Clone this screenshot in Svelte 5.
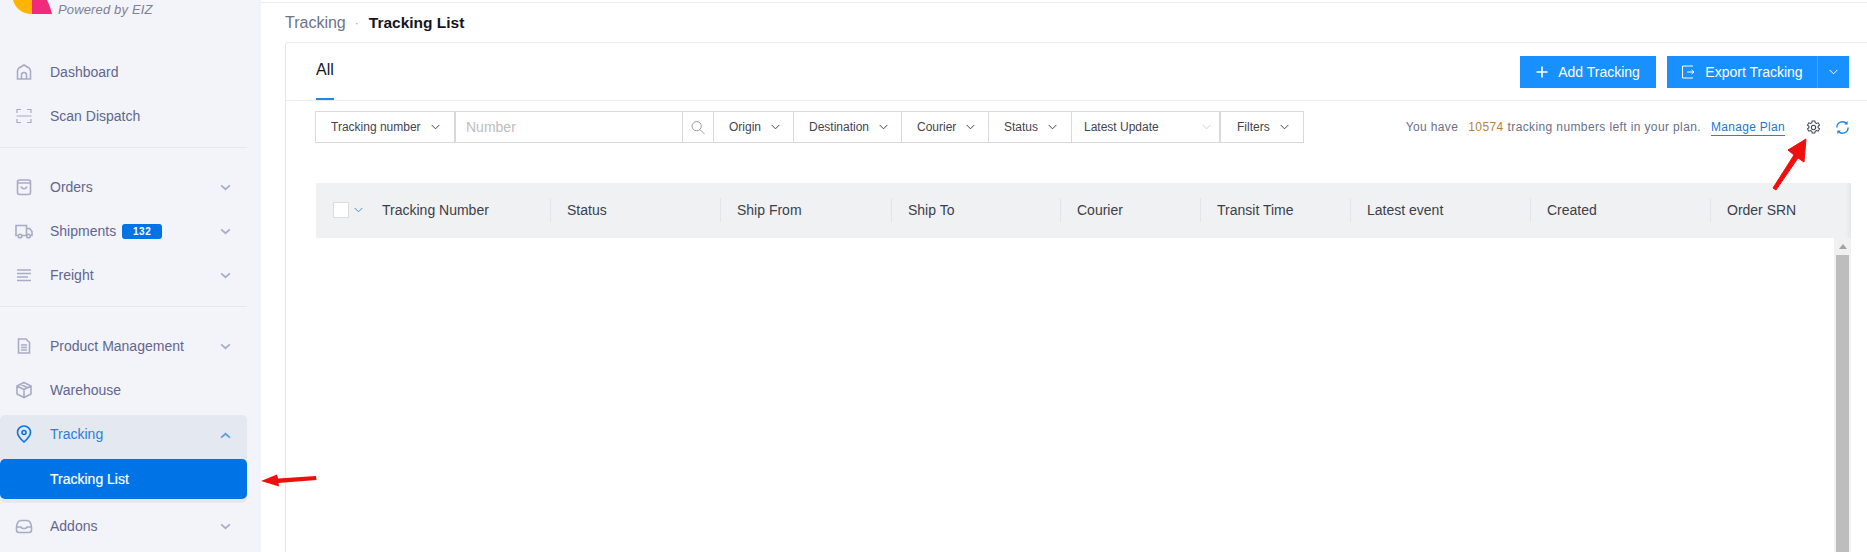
<script>
  const icon = 'icon';
  const filters = [
    { label: 'Destination', cls: 'dest' },
    { label: 'Courier', cls: 'cour' },
    { label: 'Status', cls: 'stat' }
  ];
  const columns = ['Tracking Number', 'Status', 'Ship From', 'Ship To', 'Courier', 'Transit Time', 'Latest event', 'Created', 'Order SRN'];
</script>

{#snippet chevron(up = false)}
  <svg class="nav-chev" class:up viewBox="0 0 12 8" width="11" height="7"><path d="M1 1.500 6 6l5-4.500" fill="none" stroke="currentColor" stroke-width="2"/></svg>
{/snippet}

{#snippet down()}
  <svg class="down" viewBox="0 0 10 6" width="9" height="6"><path d="M.7.7 5 5 9.300.7" fill="none" stroke="currentColor" stroke-width="1.100"/></svg>
{/snippet}

<div class="page">
  <aside class="sidebar">
    <div class="brand">
      <svg class="logo" viewBox="0 0 39 14" width="39" height="14"><path d="M0 0h19v14C9 14 2 8 0 0z" fill="#ffb400"/><path d="M19 0h15c2 4 4 9 5 14H19z" fill="#ef2b7c"/></svg>
      <em>Powered by EIZ</em>
    </div>

    <nav class="section">
      <a class="row"><svg class={icon} viewBox="0 0 18 18"><path d="M2.500 16V8c0-1 .5-2 1.500-3l5-3 5 3c1 1 1.500 2 1.500 3v8zM6.500 16v-4a2.500 2.500 0 0 1 5 0v4"/></svg><span>Dashboard</span></a>
      <a class="row"><svg class="icon thin" viewBox="0 0 18 18"><path d="M2 6V2.500h4M12 2.500h4V6M2 12v3.500h4M12 15.500h4V12M1.500 9h15"/></svg><span>Scan Dispatch</span></a>
    </nav>
    <hr />
    <nav class="section">
      <a class="row"><svg class={icon} viewBox="0 0 18 18"><rect x="2.500" y="2" width="13" height="14.500" rx="2"/><path d="M2.500 5h13M6 8.500c1 3 5 3 6 0"/></svg><span>Orders</span>{@render chevron()}</a>
      <a class="row"><svg class={icon} viewBox="0 0 18 18"><path d="M2.500 13.500H1V3.500h10.500v10H7M11.500 6.500h3l2.500 3v4h-1.500"/><circle cx="5" cy="14" r="1.800"/><circle cx="13.500" cy="14" r="1.800"/></svg><span>Shipments</span><b class="badge">132</b>{@render chevron()}</a>
      <a class="row"><svg class="icon" viewBox="0 0 18 18"><path d="M2 4h14M2 7.500h14M2 11h11M2 14.500h14"/></svg><span>Freight</span>{@render chevron()}</a>
    </nav>
    <hr />
    <nav class="section">
      <a class="row"><svg class={icon} viewBox="0 0 18 18"><path d="M3.500 2h7.500l3.500 3.500V16h-11zM6 8h6M6 10.500h6M6 13h6"/></svg><span>Product Management</span>{@render chevron()}</a>
      <a class="row"><svg class={icon} viewBox="0 0 18 18"><path d="M9 1.500l7 3.500v8l-7 3.500L2 13V5zM2 5l7 3.500L16 5M9 8.500v8M5.500 3.300l7 3.500"/></svg><span>Warehouse</span></a>
      <div class="group">
        <a class="row active"><svg class="icon pin" viewBox="0 0 18 18"><path d="M9 17C5 13.500 2.500 10.500 2.500 7.500a6.500 6.500 0 0 1 13 0c0 3-2.500 6-6.500 9.500z"/><circle cx="9" cy="7.500" r="2"/></svg><span>Tracking</span>{@render chevron(true)}</a>
        <a class="row sub">Tracking List</a>
      </div>
      <a class="row"><svg class={icon} viewBox="0 0 18 18"><path d="M1.500 10C2 6 4 3.500 6 3.500h6c2 0 4 2.500 4.500 6.500v3c0 1.500-1 2.500-2.500 2.500H4c-1.500 0-2.500-1-2.500-2.500zM1.500 10H6c.5 2 5.500 2 6 0h4.500"/></svg><span>Addons</span>{@render chevron()}</a>
    </nav>
  </aside>

  <main class="main">
    <div class="crumbs"><span class="parent">Tracking</span><i>·</i><strong>Tracking List</strong></div>

    <section class="card">
      <header class="tabs">
        <div class="tab">All</div>
        <div class="actions">
          <button class="btn add"><svg viewBox="0 0 12 12" width="12" height="12"><path d="M6 .5v11M.5 6h11" stroke="#fff" stroke-width="1.600" fill="none"/></svg>Add Tracking</button>
          <div class="split">
            <button class="btn export"><svg viewBox="0 0 14 14" width="14" height="14"><path d="M12 1H1.500v12H12M6 7h7M10.500 5 13 7l-2.500 2" stroke="#fff" fill="none"/></svg>Export Tracking</button>
            <button class="btn more">{@render down()}</button>
          </div>
        </div>
      </header>

      <div class="toolbar">
        <div class="fbox">
          <div class="cell tn">Tracking number{@render down()}</div>
          <div class="cell num">Number</div>
          <div class="cell search"><svg viewBox="0 0 16 16" width="15" height="15"><circle cx="6.500" cy="6.500" r="5.300" fill="none" stroke="#8c8c8c"/><path d="m10.500 10.500 5 5" stroke="#8c8c8c" fill="none"/></svg></div>
          <div class="cell origin">Origin{@render down()}</div>
          {#each filters as f}
            <div class="cell {f.cls}">{f.label}{@render down()}</div>
          {/each}
          <div class="cell latest">Latest Update<span class="muted">{@render down()}</span></div>
          <div class="cell filters">Filters{@render down()}</div>
        </div>

        <div class="plan">
          <span class="have">You have</span><span class="count">10574</span><span>tracking numbers left in your plan.</span>
          <a class="manage">Manage Plan</a>
          <svg class="gear" viewBox="0 0 16 16" width="15" height="15"><path d="M6.600 1h2.800l.4 1.900 1.300.7 1.900-.6 1.400 2.400-1.500 1.300v1.500l1.500 1.300-1.400 2.400-1.900-.6-1.300.7-.4 1.900H6.600l-.4-1.900-1.300-.7-1.900.6-1.400-2.400 1.500-1.300V6.700L1.600 5.400 3 3l1.900.6 1.300-.7z" fill="none" stroke="#3f4652" stroke-width="1.100"/><circle cx="8" cy="8" r="2.300" fill="none" stroke="#3f4652" stroke-width="1.100"/></svg>
          <svg class="sync" viewBox="0 0 16 16" width="15" height="15"><path d="M2 8a6 6 0 0 1 10.500-4M14 8a6 6 0 0 1-10.500 4" fill="none" stroke="#1c86e0" stroke-width="1.400"/><path d="M13.500 1v3.800H9.700zM2.500 15v-3.800h3.800z" fill="#1c86e0"/></svg>
        </div>
      </div>

      <div class="table">
        <div class="thead">
          {#each columns as c, i}
            <div class="th">
              {#if i === 0}
                <span class="check"></span><span class="check-down">{@render down()}</span>
              {/if}
              {c}
            </div>
          {/each}
        </div>
        <div class="tbody">
          <div class="scroll"><span class="arrow"></span><span class="thumb"></span></div>
        </div>
      </div>
    </section>
  </main>

  <svg class="annot left-arrow" viewBox="0 0 58 14" width="58" height="14"><path d="M0 8 16 1.500l1 4 38-2.500.5 4-38 3 .5 3.500z" fill="#ee0f0f"/></svg>
  <svg class="annot gear-arrow" viewBox="0 0 38 54" width="38" height="54"><path d="M35 1 33 24l-6-4L5 52l-3-2 21-33-6-5z" fill="#ee0f0f" stroke="#ee0f0f" stroke-linejoin="round"/></svg>
</div>

<style>
  :global(body) { margin: 0; background: #fff; }
  .page {
    position: relative; display: flex; height: 552px; width: 1867px; overflow: hidden;
    font-family: "Liberation Sans", Arial, sans-serif; color: #1f2430; background: #fff;
  }
  .sidebar { width: 261px; flex: none; background: #f2f4f9; color: #62668f; font-size: 14px; }
  .brand { height: 50px; position: relative; }
  .logo { position: absolute; left: 13px; top: 0; }
  .brand em { position: absolute; left: 58px; top: 1px; font-size: 13px; letter-spacing: .15px; line-height: 17px; color: #7d8191; }
  .section { display: block; }
  hr { margin: 9px 14px 17px 0; border: 0; border-top: 1px solid #e5e7ed; height: 0; }
  .row { display: flex; align-items: center; height: 44px; padding: 0 16px 0 15px; box-sizing: border-box; width: 247px; }
  .row span { margin-left: 17px; }
  .icon { width: 18px; height: 18px; flex: none; fill: none; stroke: #a8abc6; stroke-width: 1.600; }
  .icon.thin { stroke-width: 1.200; }
  .icon.pin { stroke: #0b74de; stroke-width: 1.600; }
  .nav-chev { margin-left: auto; color: #a9adc8; }
  .nav-chev.up { transform: rotate(180deg); color: #5f9fe0; margin-top: 2px; }
  .badge {
    margin-left: 6px; width: 40px; height: 15px; border-radius: 3px; background: #0073e6; color: #fff;
    font-size: 10px; font-weight: 700; line-height: 15px; text-align: center; letter-spacing: .5px;
  }
  .group { width: 247px; height: 88px; margin: 3px 0 1px; border-radius: 5px; background: #e4e8f0; }
  .group .active { height: 38px; margin-bottom: 6px; color: #2a7fd6; }
  .group .sub {
    height: 40px; padding-left: 50px; background: #0073e6; color: #fff; border-radius: 5px;
    -webkit-text-stroke: .2px #fff;
  }

  .main { flex: 1; min-width: 0; border-top: 1px solid transparent; position: relative; }
  .main::before { content: ""; display: block; height: 2px; border-bottom: 1px solid #ececec; margin-top: -1px; }
  .crumbs { height: 39px; padding-left: 24px; display: flex; align-items: center; font-size: 16px; box-sizing: border-box; }
  .parent { color: #6d7388; }
  .crumbs i { margin: 0 10px 0 9px; color: #9a9fb0; font-style: normal; font-size: 12px; }
  .crumbs strong { font-weight: 700; color: #14161f; font-size: 15.500px; }
  .card { margin-left: 24px; border-left: 1px solid #e6e6e6; border-top: 1px solid #ebebeb; border-top-left-radius: 3px; height: 510px; box-sizing: border-box; }
  .tabs { height: 58px; border-bottom: 1px solid #ececec; padding: 0 18px 0 30px; display: flex; justify-content: space-between; box-sizing: border-box; }
  .tab { width: 18px; height: 57px; padding-top: 17px; box-sizing: border-box; border-bottom: 2px solid #1e88e5; font-size: 16px; color: #14161f; line-height: 20px; margin-bottom: -1px; white-space: nowrap; }
  .actions { display: flex; gap: 11px; padding-top: 13px; }
  .btn { border: 0; background: #1890ff; color: #fff; height: 32px; font: 14px "Liberation Sans", Arial, sans-serif; display: flex; align-items: center; padding: 0; }
  .add { width: 136px; justify-content: center; gap: 10px; }
  .split { display: flex; }
  .export { width: 150px; justify-content: center; gap: 10px; }
  .more { width: 32px; justify-content: center; border-left: 1px solid #4aa8ff; }
  .toolbar { display: flex; justify-content: space-between; padding: 10px 17px 0 29px; font-size: 12px; height: 82px; box-sizing: border-box; }
  .fbox { display: flex; height: 32px; border: 1px solid #d9d9d9; box-sizing: border-box; color: #3f4450; width: 989px; }
  .cell { display: flex; align-items: center; gap: 10px; padding: 0 12px 0 15px; border-right: 1px solid #d9d9d9; box-sizing: border-box; white-space: nowrap; }
  .tn { width: 140px; border-right-width: 2px; }
  .num { width: 227px; font-size: 14px; color: #bdbdbd; padding-left: 10px; }
  .search { width: 31px; padding: 0 8px; justify-content: center; }
  .origin { width: 80px; }
  .dest { width: 108px; }
  .cour { width: 87px; }
  .stat { width: 83px; }
  .latest { width: 149px; padding-left: 12px; padding-right: 8px; border-right-width: 2px; }
  .filters { flex: 1; border-right: 0; padding-left: 16px; }
  .muted { color: #cfcfcf; display: flex; margin-left: auto; }
  .down { flex: none; }
  .plan { display: flex; align-items: center; height: 32px; color: #6a6f88; font-size: 12px; letter-spacing: .38px; }
  .have { margin-right: 10px; }
  .count { color: #b97f3a; margin-right: 4px; }
  .manage { margin-left: 10px; color: #1c78d0; border-bottom: 1px solid #1c86e0; height: 16px; line-height: 16px; letter-spacing: .3px; }
  .gear { margin-left: 21px; }
  .sync { margin-left: 14px; }
  .table { margin-left: 30px; width: 1535px; }
  .thead {
    display: grid; height: 55px; align-items: center; font-size: 14px; color: #3b3f4a;
    background: linear-gradient(90deg, #f0f1f3 calc(100% - 6px), #e6e7ea);
    grid-template-columns: 234px 170px 171px 169px 140px 150px 180px 180px 1fr;
  }
  .th { padding-left: 16px; height: 24px; line-height: 24px; border-left: 1px solid #e3e4e7; display: flex; align-items: center; margin-top: -1px; white-space: nowrap; box-sizing: border-box; }
  .th:first-child { border-left: 0; padding-left: 17px; }
  .check { width: 16px; height: 16px; background: #fff; border: 1px solid #dcdcdc; box-sizing: border-box; margin-right: 5px; }
  .check-down { color: #3f8fe0; display: flex; margin-right: 19px; }
  .tbody { position: relative; height: 314px; }
  .scroll { position: absolute; right: 0; top: 0; bottom: 0; width: 17px; background: #f1f1f1; }
  .arrow { position: absolute; left: 5px; top: 6px; border: 4px solid transparent; border-bottom: 5px solid #a3a3a3; border-top: 0; }
  .thumb { position: absolute; left: 2px; right: 2px; top: 17px; bottom: 0; background: #bdbdbd; }
  .annot { position: absolute; }
  .left-arrow { left: 261px; top: 473px; }
  .gear-arrow { left: 1771px; top: 138px; }
</style>
